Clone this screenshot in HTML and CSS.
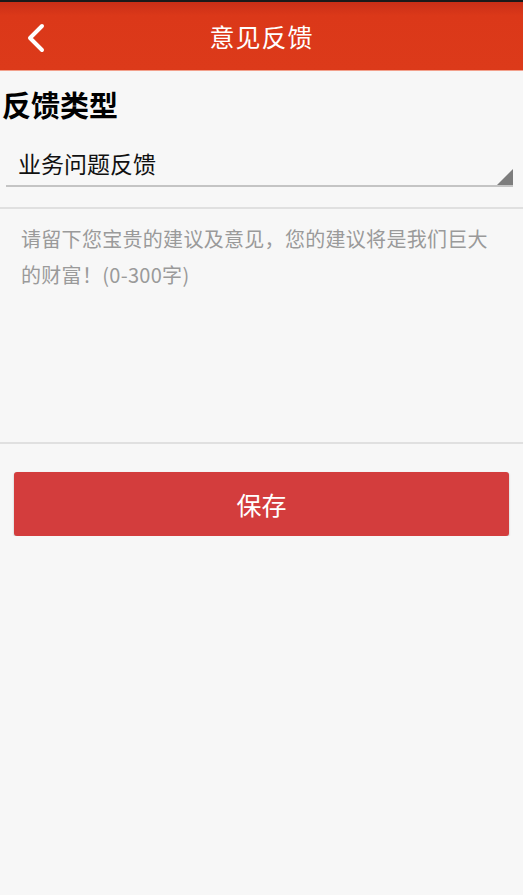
FILE: index.html
```html
<!DOCTYPE html>
<html lang="zh-CN">
<head>
    <meta charset="UTF-8">
    <meta name="viewport" content="width=device-width, initial-scale=1.0">
    <title>意见反馈</title>
    <link rel="stylesheet" href="styles.css">
</head>
<body>
    <header class="top-bar">
        <a class="back-btn" href="#">
            <svg width="20" height="30" viewBox="0 0 20 30">
                <path d="M16 3 L4 15 L16 27" fill="none" stroke="#fff" stroke-width="4" stroke-linecap="round" stroke-linejoin="round"/>
            </svg>
        </a>
        <h1>意见反馈</h1>
    </header>
    <main>
        <section class="type-section">
            <h2>反馈类型</h2>
            <div class="type-select">
                <span>业务问题反馈</span>
                <i class="corner"></i>
            </div>
        </section>
        <section class="text-section">
            <p class="placeholder">请留下您宝贵的建议及意见，您的建议将是我们巨大的财富！(0-300字)</p>
        </section>
        <div class="actions">
            <button class="save-btn">保存</button>
        </div>
    </main>
</body>
</html>
```

FILE: styles.css
```css
body {
    margin: 0;
    padding: 0;
    background-color: #f7f7f7;
    font-family: "Noto Sans CJK SC", "Noto Sans", sans-serif;
    color: #000;
}

.top-bar {
    height: 68px;
    border-top: 2px solid #1a1a1a;
    border-bottom: 1px solid #f2a08c;
    background: linear-gradient(#c92f17, #db3819 20%, #dc3a1a);
    display: flex;
    align-items: center;
    justify-content: center;
    position: relative;
}

.back-btn {
    position: absolute;
    left: 26px;
    top: 21px;
    display: block;
    width: 20px;
    height: 30px;
}

.top-bar h1 {
    margin: 0;
    color: #fff;
    font-size: 25px;
    font-weight: normal;
    letter-spacing: 1px;
}

.type-section {
    padding: 15px 0 20px;
    border-bottom: 2px solid #e0e0e0;
}

.type-section h2 {
    margin: 0 0 0 2px;
    font-size: 29px;
    line-height: 36px;
    font-weight: bold;
}

.type-select {
    margin: 23px 10px 0 6px;
    padding: 0 0 4px 12px;
    border-bottom: 2px solid #c4c4c4;
    font-size: 23px;
    line-height: 36px;
    color: #111;
    position: relative;
}

.corner {
    position: absolute;
    right: 0;
    bottom: 0;
    width: 0;
    height: 0;
    border-left: 16px solid transparent;
    border-bottom: 16px solid #7d7d7d;
}

.text-section {
    height: 235px;
    padding: 12px 30px 0 21px;
    border-bottom: 2px solid #e0e0e0;
    box-sizing: border-box;
}

.placeholder {
    margin: 0;
    color: #9a9a9a;
    font-size: 20px;
    line-height: 36px;
    letter-spacing: 0.3px;
}

.actions {
    padding: 28px 14px 0;
}

.save-btn {
    display: block;
    width: 100%;
    height: 64px;
    border: none;
    border-radius: 3px;
    background-color: #d33d3d;
    box-shadow: 0 1px 2px rgba(0, 0, 0, 0.25);
    color: #fff;
    font-family: inherit;
    font-size: 25px;
    cursor: pointer;
}
```
